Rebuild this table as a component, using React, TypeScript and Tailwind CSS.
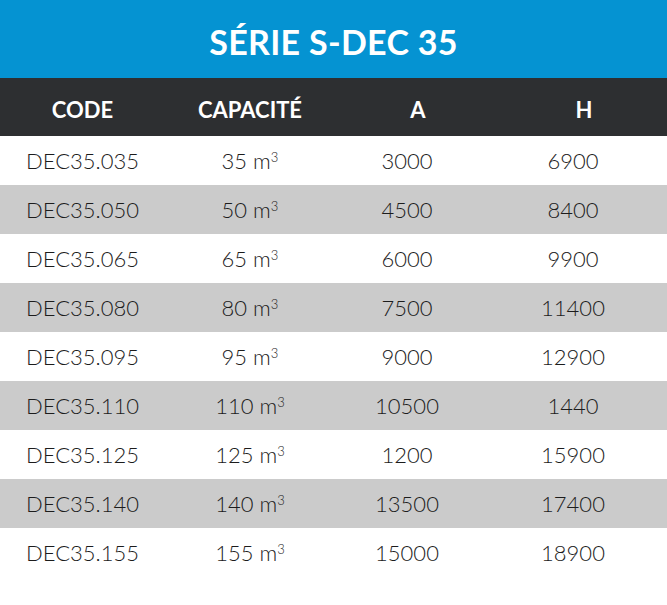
import React from 'react';

interface Row {
  code: string;
  cap: string;
  a: string;
  h: string;
}

const rows: Row[] = [
  { code: 'DEC35.035', cap: '35', a: '3000', h: '6900' },
  { code: 'DEC35.050', cap: '50', a: '4500', h: '8400' },
  { code: 'DEC35.065', cap: '65', a: '6000', h: '9900' },
  { code: 'DEC35.080', cap: '80', a: '7500', h: '11400' },
  { code: 'DEC35.095', cap: '95', a: '9000', h: '12900' },
  { code: 'DEC35.110', cap: '110', a: '10500', h: '1440' },
  { code: 'DEC35.125', cap: '125', a: '1200', h: '15900' },
  { code: 'DEC35.140', cap: '140', a: '13500', h: '17400' },
  { code: 'DEC35.155', cap: '155', a: '15000', h: '18900' },
];

const cols = 'grid grid-cols-[165px_170px_166px_166px]';

export default function App() {
  return (
    <div className="w-[667px] h-[605px] bg-white font-['Lato',sans-serif]">
      {/* title bar */}
      <div className="h-[78px] bg-[#0593d2] flex items-center justify-center">
        <h1 className="text-white font-bold text-[34px] tracking-[0.3px] pt-1">SÉRIE S-DEC 35</h1>
      </div>

      {/* column heads */}
      <div className={`${cols} h-[58px] bg-[#2d2f31] text-white font-bold text-[22px] items-center text-center pt-1`}>
        <div>CODE</div>
        <div>CAPACITÉ</div>
        <div>A</div>
        <div>H</div>
      </div>

      {/* rows */}
      <div>
        {rows.map((r, i) => (
          <div
            key={r.code}
            className={`${cols} h-[49px] items-center text-center text-[22px] font-light text-[#1c1c1c] ${i % 2 === 1 ? 'bg-[#cbcbcb]' : 'bg-white'}`}
          >
            <div>{r.code}</div>
            <div>
              {r.cap} m<sup className="text-[13px] relative -top-[7px]">3</sup>
            </div>
            <div className="pr-[22px]">{r.a}</div>
            <div className="pr-[22px]">{r.h}</div>
          </div>
        ))}
      </div>
    </div>
  );
}
